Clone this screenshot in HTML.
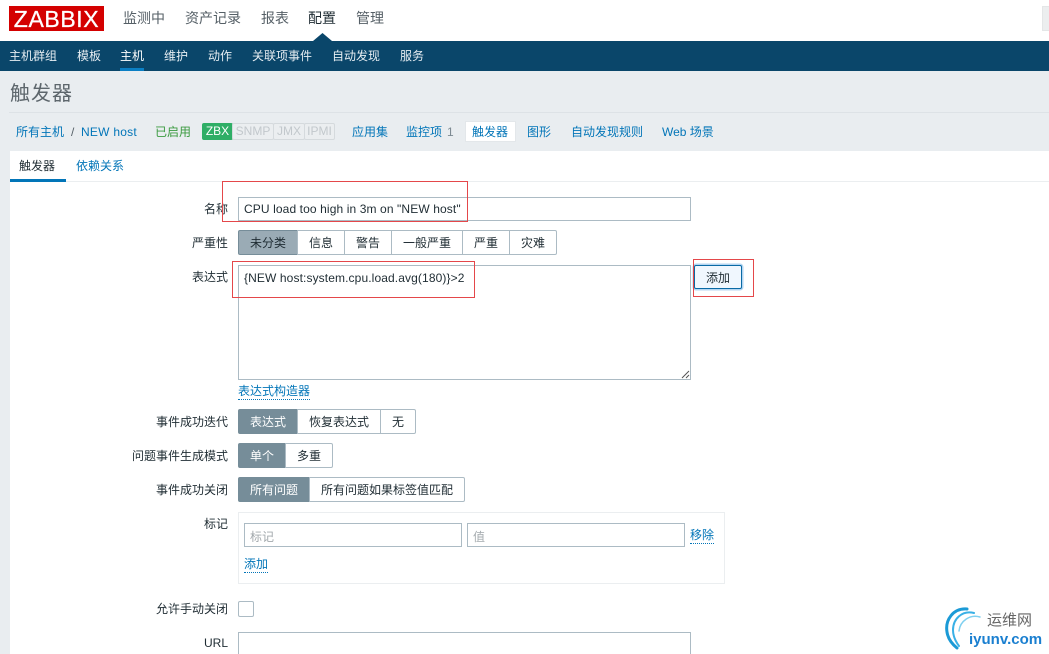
<!DOCTYPE html>
<html lang="zh"><head><meta charset="utf-8"><title>触发器</title>
<style>
*{box-sizing:border-box}
html,body{margin:0;padding:0;width:1049px;height:654px;overflow:hidden;background:#e9edf0}
body{position:relative;font:12px/20px "Liberation Sans","WenQuanYi Zen Hei","Noto Sans CJK SC",sans-serif;color:#1f2c33}
.t{position:absolute;white-space:nowrap;height:20px;line-height:20px}
.b{position:absolute}
.l{color:#0275b8}
.r{position:absolute;right:821px;white-space:nowrap;height:20px;line-height:20px;color:#1f2c33}
.n{font-size:14px;color:#555f66}
.s{color:#e6edf2}
.inp{position:absolute;background:#fff;border:1px solid #acbbc4}
.seg{position:absolute;background:#fff;border:1px solid #acbbc4;text-align:center;line-height:24px;margin-right:-1px}
.on{background:#768d99;border-color:#768d99;color:#fff}
.red{position:absolute;border:1px solid #e4474a}
.tag{position:absolute;top:123px;height:17px;line-height:15px;font-size:12px;text-align:center;background:#ebeef0;border:1px solid #d5dadd;color:#c2c8cc;border-radius:2px}
.u{border-bottom:1px dotted #0275b8;height:16px;line-height:15px}
.lat{letter-spacing:.11px}
</style></head><body>
<div class="b" style="left:0;top:0;width:1049px;height:41px;background:#fff"></div>
<div class="b" style="left:9px;top:6px;width:95px;height:25px;background:#d40000;color:#fff;font-size:23px;line-height:27px;text-align:center;letter-spacing:.6px;-webkit-text-stroke:.3px #fff">ZABBIX</div>
<span class="t n" style="left:123px;top:8px">监测中</span>
<span class="t n" style="left:185px;top:8px">资产记录</span>
<span class="t n" style="left:261px;top:8px">报表</span>
<span class="t n" style="left:308px;top:8px;color:#1f2c33">配置</span>
<span class="t n" style="left:356px;top:8px">管理</span>
<div class="b" style="left:1042px;top:6px;width:7px;height:25px;background:#eceeef;border:1px solid #e4e6e7;border-right:0"></div>
<svg class="b" style="left:313px;top:33px" width="19" height="8"><path d="M0 8L9.500 0L19 8Z" fill="#0a466a"/></svg>
<div class="b" style="left:0;top:41px;width:1049px;height:30px;background:#0a466a"></div>
<span class="t s" style="left:9px;top:46px">主机群组</span>
<span class="t s" style="left:77px;top:46px">模板</span>
<span class="t" style="left:120px;top:46px;color:#fff">主机</span>
<span class="t s" style="left:164px;top:46px">维护</span>
<span class="t s" style="left:208px;top:46px">动作</span>
<span class="t s" style="left:252px;top:46px">关联项事件</span>
<span class="t s" style="left:332px;top:46px">自动发现</span>
<span class="t s" style="left:400px;top:46px">服务</span>
<div class="b" style="left:120px;top:68px;width:24px;height:3px;background:#0b7fc4"></div>

<span class="t" style="left:10px;top:84px;font-size:20px;letter-spacing:1px;color:#5d666c">触发器</span>
<div class="b" style="left:9px;top:112px;width:1040px;height:1px;background:#dde2e6"></div>
<span class="t l" style="left:16px;top:122px">所有主机</span>
<span class="t" style="left:71px;top:122px;color:#555f66">/</span>
<span class="t l" style="left:81px;top:122px;letter-spacing:.25px">NEW host</span>
<span class="t" style="left:155px;top:122px;color:#3a9a3f">已启用</span>
<div class="tag" style="left:202px;width:31px;background:#2fae66;border-color:#2fae66;color:#fff">ZBX</div>
<div class="tag" style="left:232px;width:42px">SNMP</div>
<div class="tag" style="left:273px;width:32px">JMX</div>
<div class="tag" style="left:304px;width:31px">IPMI</div>
<span class="t l" style="left:352px;top:122px">应用集</span>
<span class="t l" style="left:406px;top:122px">监控项</span>
<span class="t" style="left:447px;top:122px;color:#7c8a92">1</span>
<div class="b" style="left:465px;top:121px;width:51px;height:21px;background:#fff;border:1px solid #e3e7ea"></div>
<span class="t l" style="left:472px;top:122px">触发器</span>
<span class="t l" style="left:527px;top:122px">图形</span>
<span class="t l" style="left:571px;top:122px">自动发现规则</span>
<span class="t l" style="left:662px;top:122px">Web 场景</span>

<div class="b" style="left:10px;top:151px;width:1039px;height:503px;background:#fff"></div>
<span class="t" style="left:19px;top:156px">触发器</span>
<span class="t l" style="left:76px;top:156px">依赖关系</span>
<div class="b" style="left:10px;top:181px;width:1039px;height:1px;background:#ebeef0"></div>
<div class="b" style="left:10px;top:179px;width:56px;height:3px;background:#0275b8"></div>

<span class="r" style="top:199px">名称</span>
<div class="inp" style="left:238px;top:197px;width:453px;height:24px"></div>
<span class="t lat" style="left:244px;top:199px">CPU load too high in 3m on "NEW host"</span>

<span class="r" style="top:233px">严重性</span>
<div class="seg on" style="left:238px;top:230px;width:60px;height:25px;background:#9aabb5;border-color:#768d99;border-radius:2px 0 0 2px;color:#1f2c33">未分类</div>
<div class="seg" style="left:297px;top:230px;width:48px;height:25px">信息</div>
<div class="seg" style="left:344px;top:230px;width:48px;height:25px">警告</div>
<div class="seg" style="left:391px;top:230px;width:72px;height:25px">一般严重</div>
<div class="seg" style="left:462px;top:230px;width:48px;height:25px">严重</div>
<div class="seg" style="left:509px;top:230px;width:48px;height:25px;border-radius:0 2px 2px 0">灾难</div>

<span class="r" style="top:267px">表达式</span>
<div class="inp" style="left:238px;top:265px;width:453px;height:115px"></div>
<span class="t lat" style="left:244px;top:268px">{NEW host:system.cpu.load.avg(180)}&gt;2</span>
<svg class="b" style="left:681px;top:369px" width="9" height="10"><path d="M1 9L8 2M5 9L8 6" stroke="#555" stroke-width="1" fill="none"/></svg>
<div class="b" style="left:694px;top:265px;width:48px;height:24px;background:#f0f7fe;border:1px solid #0a6aa5;border-radius:2px;box-shadow:0 0 0 1.500px #b4d6f2;text-align:center;line-height:24px">添加</div>
<span class="t l u" style="left:238px;top:384px">表达式构造器</span>

<span class="r" style="top:412px">事件成功迭代</span>
<div class="seg on" style="left:238px;top:409px;width:60px;height:25px;border-radius:2px 0 0 2px">表达式</div>
<div class="seg" style="left:297px;top:409px;width:84px;height:25px">恢复表达式</div>
<div class="seg" style="left:380px;top:409px;width:36px;height:25px;border-radius:0 2px 2px 0">无</div>

<span class="r" style="top:446px">问题事件生成模式</span>
<div class="seg on" style="left:238px;top:443px;width:48px;height:25px;border-radius:2px 0 0 2px">单个</div>
<div class="seg" style="left:285px;top:443px;width:48px;height:25px;border-radius:0 2px 2px 0">多重</div>

<span class="r" style="top:480px">事件成功关闭</span>
<div class="seg on" style="left:238px;top:477px;width:72px;height:25px;border-radius:2px 0 0 2px">所有问题</div>
<div class="seg" style="left:309px;top:477px;width:156px;height:25px;border-radius:0 2px 2px 0">所有问题如果标签值匹配</div>

<span class="r" style="top:514px">标记</span>
<div class="b" style="left:238px;top:512px;width:487px;height:72px;border:1px solid #ebeef0"></div>
<div class="inp" style="left:244px;top:523px;width:218px;height:24px"></div>
<span class="t" style="left:250px;top:527px;color:#a3a9ad">标记</span>
<div class="inp" style="left:467px;top:523px;width:218px;height:24px"></div>
<span class="t" style="left:473px;top:527px;color:#a3a9ad">值</span>
<span class="t l u" style="left:690px;top:528px">移除</span>
<span class="t l u" style="left:244px;top:557px">添加</span>

<span class="r" style="top:599px">允许手动关闭</span>
<div class="b" style="left:238px;top:601px;width:16px;height:16px;border:1px solid #acbbc4;border-radius:2px;background:#fff"></div>

<span class="r" style="top:633px">URL</span>
<div class="inp" style="left:238px;top:632px;width:453px;height:30px"></div>

<div class="red" style="left:222px;top:181px;width:246px;height:41px"></div>
<div class="red" style="left:232px;top:261px;width:243px;height:37px"></div>
<div class="red" style="left:693px;top:259px;width:61px;height:38px"></div>

<svg class="b" style="left:944px;top:605px" width="44" height="46" fill="none" stroke-linecap="round">
<path d="M23 4C9 3 1 15 3 27C4 34 8 39 13 43" stroke="#1b9ad6" stroke-width="3"/>
<path d="M30 8C18 5 9 14 9 25C9 32 12 37 15 41" stroke="#39b0e6" stroke-width="2"/>
<path d="M36 12C26 9 16 16 15 26" stroke="#7fd0f0" stroke-width="1.500"/>
</svg>
<span class="t" style="left:987px;top:611px;font-size:15px;color:#666">运维网</span>
<span class="t" style="left:969px;top:630px;font-size:15px;font-weight:bold;color:#1a7fd0">iyunv.com</span>
</body></html>
